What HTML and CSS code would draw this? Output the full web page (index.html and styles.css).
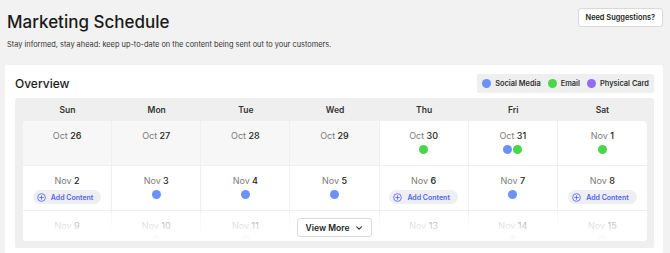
FILE: index.html
```html
<!DOCTYPE html>
<html lang="en">
<head>
  <meta charset="UTF-8" />
  <title>Marketing Schedule</title>
  <link rel="stylesheet" href="styles.css">
</head>
<body>

  <!-- Page header -->
  <header class="page-head">
    <div>
      <h1>Marketing Schedule</h1>
      <p class="subtitle">Stay informed, stay ahead: keep up-to-date on the content being sent out to your customers.</p>
    </div>
    <button class="btn">Need Suggestions?</button>
  </header>

  <!-- Overview card -->
  <section class="card">
    <div class="card-head">
      <h2>Overview</h2>
      <div class="legend">
        <span class="legend-item"><i class="dot social"></i>Social Media</span>
        <span class="legend-item"><i class="dot email"></i>Email</span>
        <span class="legend-item"><i class="dot card-dot"></i>Physical Card</span>
      </div>
    </div>

    <div class="calendar">
      <div class="weekdays">
        <span>Sun</span><span>Mon</span><span>Tue</span><span>Wed</span><span>Thu</span><span>Fri</span><span>Sat</span>
      </div>

      <div class="grid" id="grid"></div>

      <div class="fade"></div>
      <button class="btn view-more">View More
        <svg width="8" height="8" viewBox="0 0 10 10"><path d="M2 3.5 L5 6.5 L8 3.5" fill="none" stroke="#333" stroke-width="1.4" stroke-linecap="round" stroke-linejoin="round"/></svg>
      </button>
    </div>
  </section>

  <script>
    const days = [
      { m: "Oct", d: 26, past: true, items: [] },
      { m: "Oct", d: 27, past: true, items: [] },
      { m: "Oct", d: 28, past: true, items: [] },
      { m: "Oct", d: 29, past: true, items: [] },
      { m: "Oct", d: 30, items: ["email"] },
      { m: "Oct", d: 31, items: ["social", "email"] },
      { m: "Nov", d: 1, items: ["email"] },
      { m: "Nov", d: 2, add: true },
      { m: "Nov", d: 3, items: ["social"] },
      { m: "Nov", d: 4, items: ["social"] },
      { m: "Nov", d: 5, items: ["social"] },
      { m: "Nov", d: 6, add: true },
      { m: "Nov", d: 7, items: ["social"] },
      { m: "Nov", d: 8, add: true },
      { m: "Nov", d: 9, items: [] },
      { m: "Nov", d: 10, items: ["social"] },
      { m: "Nov", d: 11, items: ["social"] },
      { m: "Nov", d: 12, hidden: true, items: ["social"] },
      { m: "Nov", d: 13, items: [] },
      { m: "Nov", d: 14, items: ["social"] },
      { m: "Nov", d: 15, items: ["social"] }
    ];

    const plus = `<svg width="9" height="9" viewBox="0 0 10 10"><circle cx="5" cy="5" r="4.3" fill="none" stroke="#4f63ee" stroke-width="0.9"/><path d="M5 3 V7 M3 5 H7" stroke="#4f63ee" stroke-width="0.9" stroke-linecap="round"/></svg>`;

    const grid = document.getElementById('grid');
    days.forEach(day => {
      const cell = document.createElement('div');
      cell.className = 'day' + (day.past ? ' past' : '');
      // the cell under the "View More" button keeps its date hidden
      let inner = day.hidden
        ? `<div class="date">&nbsp;</div>`
        : `<div class="date"><span class="mon">${day.m}</span> ${day.d}</div>`;
      if (day.add) {
        inner += `<div class="items"><span class="add">${plus}Add Content</span></div>`;
      } else if (day.items.length) {
        inner += `<div class="items">${day.items.map(i => `<i class="dot ${i}"></i>`).join('')}</div>`;
      }
      cell.innerHTML = inner;
      grid.appendChild(cell);
    });
  </script>
</body>
</html>
```

FILE: styles.css
```css
/* General styles */
body {
  font-family: Inter, "Noto Sans", sans-serif;
  margin: 0;
  padding: 8px 7px 0 5px;
  background-color: #f2f2f2;
  color: #222;
}

/* Header */
.page-head {
  display: flex;
  justify-content: space-between;
  align-items: flex-start;
  padding-left: 2px;
}

h1 {
  margin: 3px 0 0;
  font-size: 17px;
  font-weight: 500;
  line-height: 22px;
  color: #1a1a1a;
}

.subtitle {
  margin: 6px 0 0;
  font-size: 7.4px;
  line-height: 12px;
  color: #333;
}

.btn {
  font-family: inherit;
  background: #fff;
  border: 1px solid #d9d9d9;
  border-radius: 3px;
  color: #222;
  font-weight: 600;
  font-size: 7.4px;
  padding: 0 7px;
  height: 19px;
  cursor: pointer;
}

/* Card */
.card {
  background: #fff;
  margin-top: 14px;
  padding: 9px 9px 6px 10px;
  border-radius: 2px;
}

.card-head {
  display: flex;
  justify-content: space-between;
  align-items: center;
}

h2 {
  margin: 0;
  font-size: 12px;
  font-weight: 500;
  color: #1a1a1a;
}

.legend {
  display: flex;
  gap: 7px;
  background: #efefef;
  height: 19px;
  align-items: center;
  padding: 0 5px 0 5px;
  border-radius: 2px;
}

.legend-item {
  display: flex;
  align-items: center;
  gap: 4px;
  font-size: 7.4px;
  font-weight: 600;
  color: #333;
}

.dot {
  display: inline-block;
  width: 9px;
  height: 9px;
  border-radius: 50%;
}

.dot.social { background: #6b91fb; }
.dot.email { background: #48d748; }
.dot.card-dot { background: #8e6cf7; }

/* Calendar */
.calendar {
  position: relative;
  margin-top: 5px;
  background: #efefef;
  padding: 0 7px 7px 8px;
  border-radius: 2px;
}

.weekdays {
  display: grid;
  grid-template-columns: repeat(7, 1fr);
  height: 23px;
  align-items: center;
  text-align: center;
  font-size: 8.5px;
  font-weight: 600;
  color: #333;
}

.grid {
  display: grid;
  grid-template-columns: repeat(7, 1fr);
  background: #fff;
  border-radius: 4px;
  height: 120px;
  overflow: hidden;
}

.day {
  text-align: center;
  padding: 9px 0 10px;
  border-right: 1px solid #efefef;
  border-bottom: 1px solid #efefef;
  min-height: 25px;
}

.day:nth-child(7n) { border-right: none; }
.day.past { background: #f7f7f7; }

.date {
  font-size: 9px;
  line-height: 12px;
  font-weight: 500;
  color: #222;
}

.date .mon {
  color: #7a7a7a;
  font-weight: 400;
}

.items {
  display: flex;
  justify-content: center;
  gap: 1px;
  margin-top: 3px;
  min-height: 10px;
}

.add {
  display: inline-flex;
  align-items: center;
  gap: 5px;
  background: #eeeff3;
  color: #4f63ee;
  font-size: 7px;
  font-weight: 600;
  height: 14px;
  padding: 0 8px 0 4px;
  border-radius: 7px;
}

.fade {
  position: absolute;
  left: 8px;
  right: 7px;
  bottom: 7px;
  height: 28px;
  background: linear-gradient(rgba(255,255,255,0.5), rgba(255,255,255,0.92) 70%, #fff);
  border-radius: 0 0 4px 4px;
}

.view-more {
  position: absolute;
  left: 50%;
  bottom: 11px;
  transform: translateX(-50%);
  display: flex;
  align-items: center;
  gap: 6px;
  font-size: 8.5px;
  padding: 0 8px;
}
```
